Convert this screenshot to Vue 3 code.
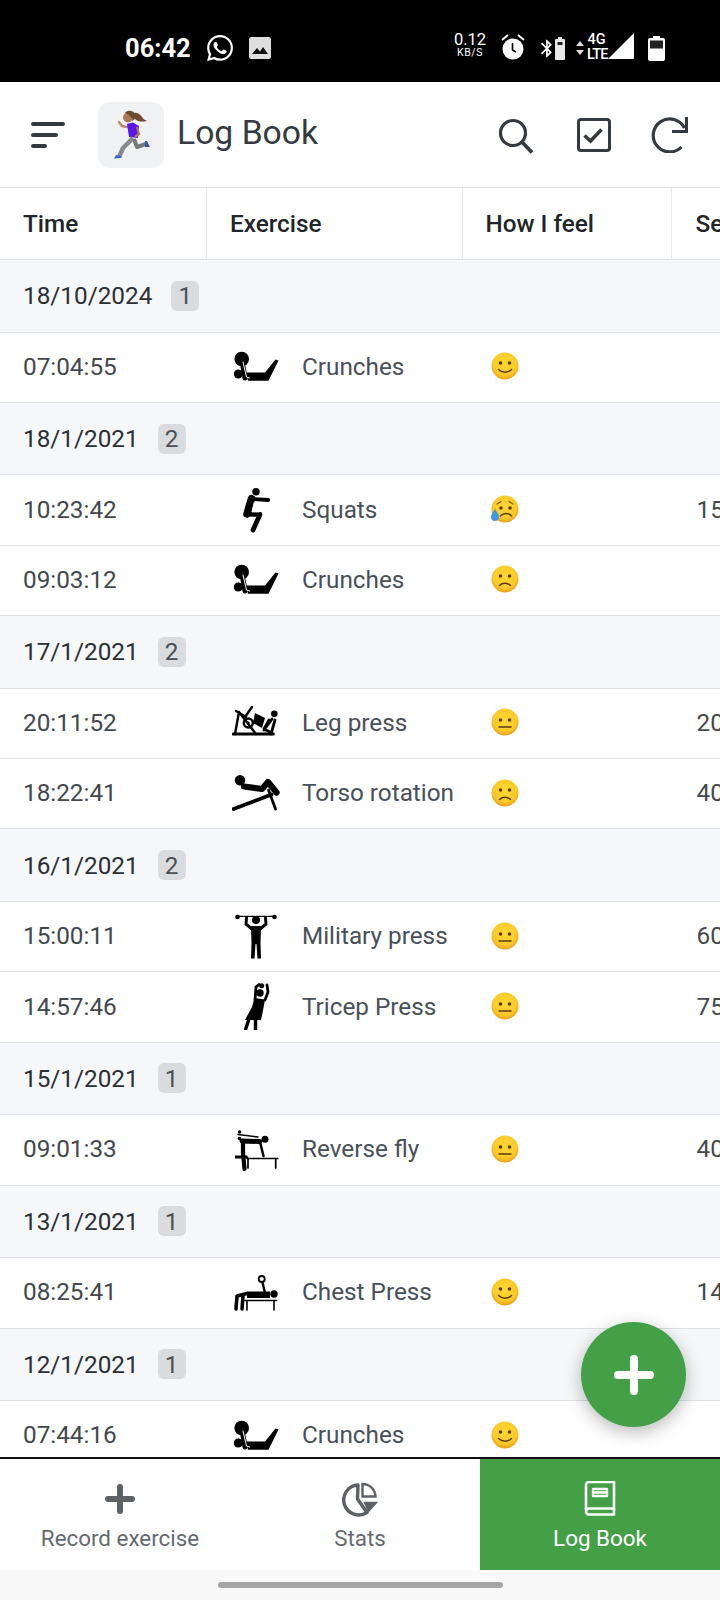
<template>
  <div class="phone">
    <!-- shared gradient for the mood faces -->
    <svg class="defs" width="0" height="0">
      <defs>
        <radialGradient id="faceGrad" cx="50%" cy="40%" r="60%">
          <stop offset="0%" stop-color="#fdd835" />
          <stop offset="72%" stop-color="#fbc92a" />
          <stop offset="100%" stop-color="#e99f18" />
        </radialGradient>
      </defs>
    </svg>

    <div class="status-bar">
      <span class="clock">06:42</span>
      <svg class="st-whatsapp" viewBox="0 0 24 24" fill="#fff">
        <path d="M17.472 14.382c-.297-.149-1.758-.867-2.03-.967-.273-.099-.471-.148-.67.15-.197.297-.767.966-.94 1.164-.173.199-.347.223-.644.075-.297-.15-1.255-.463-2.39-1.475-.883-.788-1.48-1.761-1.653-2.059-.173-.297-.018-.458.13-.606.134-.133.298-.347.446-.52.149-.174.198-.298.298-.497.099-.198.05-.371-.025-.52-.075-.149-.669-1.612-.916-2.207-.242-.579-.487-.5-.669-.51-.173-.008-.371-.01-.57-.01-.198 0-.52.074-.792.372-.272.297-1.04 1.016-1.04 2.479 0 1.462 1.065 2.875 1.213 3.074.149.198 2.096 3.2 5.077 4.487.709.306 1.262.489 1.694.625.712.227 1.36.195 1.871.118.571-.085 1.758-.719 2.006-1.413.248-.694.248-1.289.173-1.413-.074-.124-.272-.198-.57-.347m-5.421 7.403h-.004a9.87 9.87 0 01-5.031-1.378l-.361-.214-3.741.982.998-3.648-.235-.374a9.86 9.86 0 01-1.51-5.26c.001-5.45 4.436-9.884 9.888-9.884 2.64 0 5.122 1.03 6.988 2.898a9.825 9.825 0 012.893 6.994c-.003 5.45-4.437 9.884-9.885 9.884m8.413-18.297A11.815 11.815 0 0012.05 0C5.495 0 .16 5.335.157 11.892c0 2.096.547 4.142 1.588 5.945L.057 24l6.305-1.654a11.882 11.882 0 005.683 1.448h.005c6.554 0 11.89-5.335 11.893-11.893a11.821 11.821 0 00-3.48-8.413z" />
      </svg>
      <svg class="st-gallery" viewBox="0 0 22 22">
        <rect width="22" height="22" rx="2.5" fill="#dedede" />
        <path d="M3 17l5-6 3 3.500 3-4.500 5 7z" fill="#111" />
      </svg>

      <div class="status-right">
        <div class="net-speed">
          <span class="speed-num">0.12</span>
          <span class="speed-unit">KB/S</span>
        </div>
        <svg class="st-alarm" viewBox="0 0 28 28">
          <circle cx="14" cy="16" r="10.5" fill="#fff" />
          <path d="M3 7l6-5M25 7l-6-5" stroke="#fff" stroke-width="2" />
          <path d="M13.5 10v7l3.5 2" stroke="#000" stroke-width="1.6" fill="none" />
        </svg>
        <svg class="st-bt" viewBox="4 1 15 22" fill="#fff">
          <path d="M17.71 7.71L12 2h-1v7.59L6.41 5 5 6.41 10.59 12 5 17.59 6.41 19 11 14.41V22h1l5.71-5.71-4.3-4.29 4.3-4.29zM13 5.83l1.88 1.88L13 9.59V5.83zm1.88 10.46L13 18.17v-3.76l1.88 1.88z" />
        </svg>
        <svg class="st-minibat" viewBox="0 0 10 23">
          <path d="M3 0h4v2h2a1 1 0 011 1v19a1 1 0 01-1 1H1a1 1 0 01-1-1V3a1 1 0 011-1h2z" fill="#e8e8e8" />
          <rect x="2.5" y="5" width="5" height="3" fill="#222" />
        </svg>
        <svg class="st-arrows" viewBox="0 0 8 14" fill="#ddd">
          <path d="M4 0l4 5H0zM0 9h8l-4 5z" />
        </svg>
        <div class="net-type">
          <span>4G</span>
          <span class="lte">LTE</span>
        </div>
        <svg class="st-signal" viewBox="0 0 26 26" fill="#fff">
          <path d="M26 0v25a1 1 0 01-1 1H0z" />
        </svg>
        <svg class="st-battery" viewBox="0 0 17 25">
          <path d="M5 0h7v2h3a2 2 0 012 2v19a2 2 0 01-2 2H2a2 2 0 01-2-2V4a2 2 0 012-2h3z" fill="#fff" />
          <rect x="2" y="4.5" width="13" height="8" fill="#222" />
        </svg>
      </div>
    </div>

    <header class="app-header">
      <div class="menu-btn">
        <span class="bar bar-1"></span>
        <span class="bar bar-2"></span>
        <span class="bar bar-3"></span>
      </div>
      <div class="app-icon">
        <svg viewBox="0 0 66 66" width="66" height="66">
          <path d="M33 12c5-3 9 0 11 3 1 2 3 3 5 4-5 1-9 1-12-2l-3 2z" fill="#6f4a30" />
          <circle cx="30" cy="15.5" r="5" fill="#a9795a" />
          <path d="M27 11c2-3 8-3 10 1l-3 5c-1-3-4-5-7-6z" fill="#6f4a30" />
          <path d="M29 25l-5-1-3-4" stroke="#b98a68" stroke-width="2.5" fill="none" stroke-linecap="round" />
          <path d="M29 22l6-1.500 6 3.500-1 12-9-1z" fill="#5b17e8" />
          <path d="M39 25l2 7-4 3" stroke="#a9795a" stroke-width="2.2" fill="none" />
          <path d="M35 36L25 46l-3.500 8" stroke="#8a8a8c" stroke-width="4.5" fill="none" stroke-linejoin="round" />
          <path d="M36 37l3 8 9-3" stroke="#77777a" stroke-width="4" fill="none" stroke-linejoin="round" />
          <path d="M18 53l5 .5 .5 2.500-7.500 .5z" fill="#3f6bc4" />
          <path d="M47 39l2 0 3 6-5 0z" fill="#35599f" />
        </svg>
      </div>
      <h1 class="title">Log Book</h1>
      <div class="actions">
        <svg class="act-search" viewBox="0 0 36 36" fill="none" stroke="#343a40" stroke-width="3.2">
          <circle cx="15" cy="15" r="12.5" />
          <path d="M24 24l10 10.500" stroke-width="3.8" />
        </svg>
        <svg class="act-check" viewBox="0 0 34 34" fill="none" stroke="#343a40">
          <rect x="1.5" y="1.5" width="31" height="31" rx="2.5" stroke-width="3" />
          <path d="M7.5 17.500l6 5.500 11-11.500" stroke-width="3.6" />
        </svg>
        <svg class="act-redo" viewBox="0 0 37 37" fill="none" stroke="#343a40" stroke-width="3.2">
          <path d="M33.5 12A16.500 16.500 0 1 0 30.500 31" />
          <path d="M35.5 1v14.500H21" />
        </svg>
      </div>
    </header>

    <div class="table-wrap">
      <div class="tr thead">
        <div class="th">Time</div>
        <div class="th">Exercise</div>
        <div class="th">How I feel</div>
        <div class="th th-last">Sets</div>
      </div>

      <template v-for="row in rows" :key="row.id">
        <div v-if="row.date" class="tr group-row">
          <span class="group-date">{{ row.date }}</span>
          <span class="count">{{ row.count }}</span>
        </div>
        <div v-else class="tr">
          <div class="td">{{ row.time }}</div>
          <div class="td ex-cell">
            <svg class="ex-icon" viewBox="0 0 48 48" fill="#000" stroke-linecap="round" stroke-linejoin="round">
              <template v-if="row.icon === 'crunches'">
                <circle cx="9.7" cy="17" r="7.3" />
                <circle cx="6.3" cy="32" r="4.5" />
                <path d="M14 30.500H33L43.500 17.500 46.500 18.500 36.500 38.700H16Z" />
                <path d="M10 19l3 17" stroke="#000" stroke-width="5" fill="none" />
                <path d="M11 20l3.500 15 3 1" stroke="#fff" stroke-width="1" fill="none" />
              </template>
              <template v-else-if="row.icon === 'squats'">
                <circle cx="24" cy="6.700" r="3.700" />
                <path d="M19.500 13.500L15 29" stroke="#000" stroke-width="7.500" fill="none" />
                <path d="M20 14l16.300 1" stroke="#000" stroke-width="3.800" fill="none" />
                <path d="M14 29l14 .5-7 15.500" stroke="#000" stroke-width="4.800" fill="none" />
                <path d="M22 17.500l-2 9.500h7" stroke="#fff" stroke-width=".8" fill="none" />
              </template>
              <template v-else-if="row.icon === 'legpress'">
                <path d="M1.300 36h40" stroke="#000" stroke-width="3" fill="none" />
                <path d="M3 36L7 14l17 22M4 13l10 6M20 9l-7 10" stroke="#000" stroke-width="2.400" fill="none" />
                <circle cx="16.300" cy="25" r="4.500" fill="none" stroke="#000" stroke-width="2.400" />
                <circle cx="16.300" cy="25" r="1.400" />
                <path d="M23 15l10 5-3 10-9-5z" />
                <circle cx="42.300" cy="15.800" r="3.300" />
                <path d="M40 21l-8 11M32 31l8 4M43 22l-4 14M37 22l-5 9" stroke="#000" stroke-width="2.800" fill="none" />
              </template>
              <template v-else-if="row.icon === 'torso'">
                <circle cx="8" cy="11.200" r="5.200" />
                <path d="M12 17.500l18 2.500 6-7 8.500 10.500" stroke="#000" stroke-width="6.200" fill="none" />
                <path d="M1.500 40L39.500 25.500" stroke="#000" stroke-width="3.800" fill="none" />
                <path d="M36.500 21l7 19" stroke="#000" stroke-width="2.800" fill="none" />
              </template>
              <template v-else-if="row.icon === 'military'">
                <path d="M6 4.300h36" stroke="#000" stroke-width="1.200" stroke-dasharray="5 1" fill="none" />
                <circle cx="5.500" cy="5" r="2.300" />
                <circle cx="42.500" cy="5" r="2.300" />
                <circle cx="24" cy="8" r="4" />
                <path d="M14.500 6l-.5 6 6 5M33.500 6l.5 6-6 5" stroke="#000" stroke-width="3" fill="none" />
                <path d="M19 14h10l-.5 17 .5 15.500h-3.500L24.500 32h-1l-1 14.500H19L19.500 31z" />
              </template>
              <template v-else-if="row.icon === 'tricep'">
                <circle cx="29.700" cy="3.700" r="2.500" />
                <circle cx="28" cy="11" r="3.700" />
                <path d="M23 18l1-13 3-2.500M35 3l1 7-3 8" stroke="#000" stroke-width="2.800" fill="none" />
                <path d="M22.500 16l10.500 1.500-2 11-2 9.500H13l7-13z" />
                <path d="M17 37l-3.500 10.500M23.500 37v10.500" stroke="#000" stroke-width="3.400" fill="none" />
              </template>
              <template v-else-if="row.icon === 'reversefly'">
                <circle cx="7.500" cy="7" r="1.800" />
                <circle cx="7.500" cy="13.500" r="1.800" />
                <circle cx="33" cy="14.200" r="3.500" />
                <path d="M6 9.500l20 2.500" stroke="#000" stroke-width="1.400" fill="none" />
                <path d="M10 16l18 .5" stroke="#000" stroke-width="5" fill="none" />
                <path d="M11 17l0 11 1.500 16" stroke="#000" stroke-width="4.200" fill="none" />
                <path d="M3 30.500h12l2 3H3z" />
                <path d="M28 17l3.500 14" stroke="#000" stroke-width="2.500" fill="none" />
                <path d="M15 33.500h30.700M16 33.500v9.500M43.700 33.500v9.500" stroke="#000" stroke-width="1.700" fill="none" />
              </template>
              <template v-else-if="row.icon === 'chest'">
                <circle cx="29.700" cy="11" r="3" fill="none" stroke="#000" stroke-width="1.800" />
                <path d="M30.500 14.500L33 25" stroke="#000" stroke-width="2.400" fill="none" />
                <circle cx="42" cy="26" r="3.700" />
                <path d="M15 23.500h23v6.500H15z" />
                <path d="M15 25.500L5 28l-1 13M11 28l-1 13" stroke="#000" stroke-width="3.500" fill="none" />
                <path d="M13 32.500h31.700M15 32.500V42M42 32.500V42" stroke="#000" stroke-width="1.600" fill="none" />
              </template>
            </svg>
            <span class="ex-name">{{ row.name }}</span>
          </div>
          <div class="td mood-cell">
            <svg class="face" viewBox="0 0 28 28">
              <circle cx="14" cy="14" r="13.5" fill="url(#faceGrad)" />
              <template v-if="row.mood === 'smile'">
                <circle cx="9.5" cy="11" r="1.8" fill="#5a3d12" />
                <circle cx="18.5" cy="11" r="1.8" fill="#5a3d12" />
                <path d="M7.500 17.500c3.500 3.500 9.500 3.500 13 0" stroke="#5a3d12" stroke-width="1.5" fill="none" stroke-linecap="round" />
              </template>
              <template v-else-if="row.mood === 'sad'">
                <circle cx="9.5" cy="11" r="1.8" fill="#5a3d12" />
                <circle cx="18.5" cy="11" r="1.8" fill="#5a3d12" />
                <path d="M8.500 20.500c3-3 8-3 11 0" stroke="#5a3d12" stroke-width="1.5" fill="none" stroke-linecap="round" />
              </template>
              <template v-else-if="row.mood === 'neutral'">
                <circle cx="9.5" cy="12" r="1.8" fill="#5a3d12" />
                <circle cx="18.5" cy="12" r="1.8" fill="#5a3d12" />
                <path d="M8 19h12" stroke="#5a3d12" stroke-width="1.5" fill="none" stroke-linecap="round" />
              </template>
              <template v-else>
                <circle cx="10" cy="13" r="1.8" fill="#5a3d12" />
                <circle cx="19" cy="13" r="1.8" fill="#5a3d12" />
                <path d="M6 9l4-2.500M22 9l-4-2.500" stroke="#7a5416" stroke-width="1.2" fill="none" stroke-linecap="round" />
                <path d="M9.500 21c3-3.500 8-3.500 11 0" stroke="#5a3d12" stroke-width="1.5" fill="none" stroke-linecap="round" />
                <path d="M4 14c2 3 4 5.500 4 8a4 4 0 01-8 0c0-2.500 2-5 4-8z" fill="#3f97e6" />
              </template>
            </svg>
          </div>
          <div class="td">{{ row.sets }}</div>
        </div>
      </template>
    </div>

    <button class="fab" aria-label="Add">
      <svg viewBox="0 0 40 40" width="40" height="40" stroke="#fff" stroke-width="8" stroke-linecap="round">
        <path d="M20 4v32M4 20h32" />
      </svg>
    </button>

    <nav class="bottom-nav">
      <div class="tab">
        <svg class="tab-icon" viewBox="0 0 36 36" stroke="#5e6168" stroke-width="6" stroke-linecap="round">
          <path d="M18 6v24M6 18h24" />
        </svg>
        <span>Record exercise</span>
      </div>
      <div class="tab">
        <svg class="tab-icon" viewBox="0 0 36 36" fill="none" stroke="#5e6168">
          <path d="M16 4A15 15 0 1 0 25 31.500L15.500 18z" stroke-width="3.4" stroke-linejoin="round" />
          <path d="M20.500 3V15.500H33.500A13 13 0 0 0 20.500 3z" stroke-width="2.4" />
          <path d="M21.300 20.700h15l-10 11z" fill="#5e6168" stroke="none" />
        </svg>
        <span>Stats</span>
      </div>
      <div class="tab tab-active">
        <svg class="tab-icon" viewBox="0 0 36 36" fill="none" stroke="#fff" stroke-width="2.6" stroke-linejoin="round">
          <path d="M4 29V4a3 3 0 013-3h25v26.500H7a3 3 0 00-3 3 3 3 0 003 3h25v-6" />
          <path d="M11 8h14v7H11zM11 11.500h14" stroke-width="2.4" />
        </svg>
        <span>Log Book</span>
      </div>
    </nav>

    <div class="gesture-bar">
      <span class="gesture-pill"></span>
    </div>
  </div>
</template>

<script setup>
const entries = [
  { date: '18/10/2024', count: 1 },
  { time: '07:04:55', icon: 'crunches', name: 'Crunches', mood: 'smile', sets: '' },
  { date: '18/1/2021', count: 2 },
  { time: '10:23:42', icon: 'squats', name: 'Squats', mood: 'tear', sets: '15' },
  { time: '09:03:12', icon: 'crunches', name: 'Crunches', mood: 'sad', sets: '' },
  { date: '17/1/2021', count: 2 },
  { time: '20:11:52', icon: 'legpress', name: 'Leg press', mood: 'neutral', sets: '20' },
  { time: '18:22:41', icon: 'torso', name: 'Torso rotation', mood: 'sad', sets: '40' },
  { date: '16/1/2021', count: 2 },
  { time: '15:00:11', icon: 'military', name: 'Military press', mood: 'neutral', sets: '60' },
  { time: '14:57:46', icon: 'tricep', name: 'Tricep Press', mood: 'neutral', sets: '75' },
  { date: '15/1/2021', count: 1 },
  { time: '09:01:33', icon: 'reversefly', name: 'Reverse fly', mood: 'neutral', sets: '40' },
  { date: '13/1/2021', count: 1 },
  { time: '08:25:41', icon: 'chest', name: 'Chest Press', mood: 'smile', sets: '14' },
  { date: '12/1/2021', count: 1 },
  { time: '07:44:16', icon: 'crunches', name: 'Crunches', mood: 'smile', sets: '' }
]

const rows = entries.map((e, i) => ({ ...e, id: i }))
</script>

<style scoped>
.phone {
  position: relative;
  width: 720px;
  height: 1600px;
  display: flex;
  flex-direction: column;
  overflow: hidden;
  background: #fff;
  font-family: Roboto, "Liberation Sans", sans-serif;
  color: #212529;
}

.defs {
  position: absolute;
}

/* status bar */
.status-bar {
  flex: 0 0 82px;
  display: flex;
  align-items: center;
  padding: 14px 55px 0 125px;
  box-sizing: border-box;
  background: #000;
  color: #fff;
}

.clock {
  width: 66px;
  font-size: 25.5px;
  font-weight: 700;
}

.st-whatsapp {
  width: 26px;
  height: 26px;
  margin-left: 16px;
}

.st-gallery {
  width: 22px;
  height: 22px;
  margin-left: 16px;
}

.status-right {
  display: flex;
  align-items: center;
  margin-left: auto;
}

.net-speed {
  display: flex;
  flex-direction: column;
  align-items: center;
  width: 30px;
  margin-top: -6px;
  line-height: 1;
}

.speed-num {
  font-size: 16.5px;
}

.speed-unit {
  font-size: 10.5px;
  letter-spacing: .6px;
}

.st-alarm {
  width: 28px;
  height: 28px;
  margin-left: 14px;
  margin-top: -3px;
}

.st-bt {
  width: 13px;
  height: 23px;
  margin-left: 13px;
}

.st-minibat {
  width: 10px;
  height: 23px;
  margin-left: 2px;
}

.st-arrows {
  width: 8px;
  height: 14px;
  margin-left: 11px;
}

.net-type {
  display: flex;
  flex-direction: column;
  width: 19px;
  margin-left: 3px;
  margin-top: -3px;
  font-size: 14.5px;
  font-weight: 500;
  line-height: 15px;
  text-align: center;
}

.lte {
  letter-spacing: -.8px;
}

.st-signal {
  width: 26px;
  height: 26px;
  margin-left: 2px;
  margin-top: -4px;
}

.st-battery {
  width: 17px;
  height: 25px;
  margin-left: 14px;
}

/* app header */
.app-header {
  flex: 0 0 105px;
  display: flex;
  align-items: center;
  padding: 0 32px 0 31px;
  box-sizing: border-box;
}

.menu-btn {
  display: flex;
  flex-direction: column;
  gap: 7px;
  width: 34px;
}

.bar {
  display: block;
  height: 4px;
  border-radius: 2px;
  background: #343a40;
}

.bar-1 { width: 34px; }
.bar-2 { width: 27px; }
.bar-3 { width: 16px; }

.app-icon {
  width: 66px;
  height: 66px;
  margin-left: 33px;
  border-radius: 12px;
  background: #f0f1f3;
}

.app-icon svg {
  display: block;
}

.title {
  margin: 0 0 4px 13px;
  font-size: 33.7px;
  font-weight: 400;
  color: #343a40;
}

.actions {
  display: flex;
  align-items: center;
  margin-left: auto;
}

.act-search {
  width: 36px;
  height: 36px;
  margin-top: 2px;
}

.act-check {
  width: 34px;
  height: 34px;
  margin-left: 43px;
}

.act-redo {
  width: 37px;
  height: 37px;
  margin-left: 40px;
}

/* table */
.table-wrap {
  flex: 1;
  min-height: 0;
  overflow: hidden;
  border-top: 1px solid #dee2e6;
}

.tr {
  display: grid;
  grid-template-columns: 207px 255.5px 209px 160px;
  width: 832px;
  height: 70.4px;
  box-sizing: border-box;
  border-bottom: 1px solid #dee2e6;
  font-size: 24.3px;
}

.thead {
  height: 72px;
}

.th {
  display: flex;
  align-items: center;
  padding-left: 23px;
  font-weight: 500;
  border-right: 1px solid #e9ecef;
}

.th-last {
  padding-left: 24px;
  border-right: 0;
}

.td {
  display: flex;
  align-items: center;
  padding-left: 23px;
  padding-bottom: 2px;
  color: #43484d;
}

.td:last-child {
  padding-left: 25px;
}

.ex-cell {
  padding-left: 25px;
  color: #495057;
}

.ex-icon {
  flex: none;
  width: 48px;
  height: 48px;
}

.ex-name {
  margin-left: 22px;
  white-space: nowrap;
}

.mood-cell {
  padding-left: 28px;
}

.face {
  width: 28px;
  height: 28px;
}

.group-row {
  display: flex;
  align-items: center;
  height: 72.5px;
  padding-left: 23px;
  background: #f6f7f9;
  color: #2b3035;
}

.count {
  display: flex;
  align-items: center;
  justify-content: center;
  width: 28px;
  height: 30px;
  margin-left: 19px;
  border-radius: 6px;
  background: #d9dbde;
  color: #495057;
}

/* floating button */
.fab {
  position: absolute;
  left: 581px;
  top: 1322px;
  display: flex;
  align-items: center;
  justify-content: center;
  width: 105px;
  height: 105px;
  padding: 0;
  border: 0;
  border-radius: 50%;
  background: #43a047;
  box-shadow: 0 5px 18px rgba(0, 0, 0, .28);
}

/* bottom navigation */
.bottom-nav {
  flex: 0 0 113px;
  display: grid;
  grid-template-columns: repeat(3, 240px);
  box-sizing: border-box;
  border-top: 2px solid #111;
  background: #fff;
}

.tab {
  display: flex;
  flex-direction: column;
  align-items: center;
  padding-top: 22px;
  font-size: 22.4px;
  color: #666a70;
}

.tab span {
  margin-top: 8px;
  line-height: 26px;
}

.tab-icon {
  width: 36px;
  height: 36px;
}

.tab-active {
  background: #43a047;
  color: #fff;
}

.gesture-bar {
  flex: 0 0 30px;
  display: flex;
  justify-content: center;
  padding-top: 12px;
  box-sizing: border-box;
  background: #f8f8f8;
}

.gesture-pill {
  width: 285px;
  height: 6px;
  border-radius: 3px;
  background: #a5a5a5;
}
</style>
